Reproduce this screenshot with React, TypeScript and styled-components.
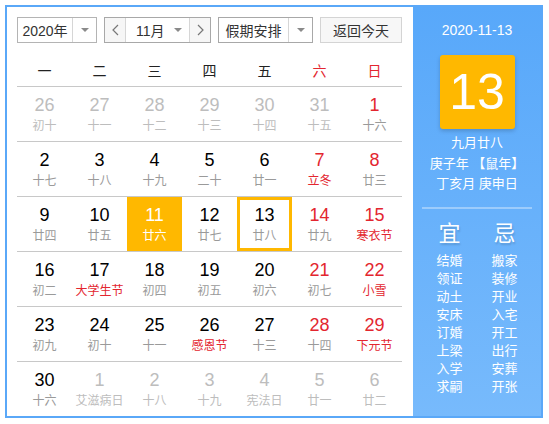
import React from 'react';
import styled, { createGlobalStyle } from 'styled-components';

const GlobalStyle = createGlobalStyle`
  html, body {
    margin: 0;
    padding: 0;
    background: #ffffff;
  }
  body {
    font-family: "Liberation Sans", "Noto Sans CJK SC", sans-serif;
  }
`;

const RED = '#e3262f';
const YELLOW = '#ffb800';

type Day = {
  num: number;
  lunar: string;
  other?: boolean;
  weekend?: boolean;
  festival?: boolean;
};

const weeks: Day[][] = [
  [
    { num: 26, lunar: '初十', other: true },
    { num: 27, lunar: '十一', other: true },
    { num: 28, lunar: '十二', other: true },
    { num: 29, lunar: '十三', other: true },
    { num: 30, lunar: '十四', other: true },
    { num: 31, lunar: '十五', other: true },
    { num: 1, lunar: '十六', weekend: true }
  ],
  [
    { num: 2, lunar: '十七' },
    { num: 3, lunar: '十八' },
    { num: 4, lunar: '十九' },
    { num: 5, lunar: '二十' },
    { num: 6, lunar: '廿一' },
    { num: 7, lunar: '立冬', weekend: true, festival: true },
    { num: 8, lunar: '廿三', weekend: true }
  ],
  [
    { num: 9, lunar: '廿四' },
    { num: 10, lunar: '廿五' },
    { num: 11, lunar: '廿六' },
    { num: 12, lunar: '廿七' },
    { num: 13, lunar: '廿八' },
    { num: 14, lunar: '廿九', weekend: true },
    { num: 15, lunar: '寒衣节', weekend: true, festival: true }
  ],
  [
    { num: 16, lunar: '初二' },
    { num: 17, lunar: '大学生节', festival: true },
    { num: 18, lunar: '初四' },
    { num: 19, lunar: '初五' },
    { num: 20, lunar: '初六' },
    { num: 21, lunar: '初七', weekend: true },
    { num: 22, lunar: '小雪', weekend: true, festival: true }
  ],
  [
    { num: 23, lunar: '初九' },
    { num: 24, lunar: '初十' },
    { num: 25, lunar: '十一' },
    { num: 26, lunar: '感恩节', festival: true },
    { num: 27, lunar: '十三' },
    { num: 28, lunar: '十四', weekend: true },
    { num: 29, lunar: '下元节', weekend: true, festival: true }
  ],
  [
    { num: 30, lunar: '十六' },
    { num: 1, lunar: '艾滋病日', other: true },
    { num: 2, lunar: '十八', other: true },
    { num: 3, lunar: '十九', other: true },
    { num: 4, lunar: '宪法日', other: true },
    { num: 5, lunar: '廿一', other: true },
    { num: 6, lunar: '廿二', other: true }
  ]
];

const weekdays = ['一', '二', '三', '四', '五', '六', '日'];
const goodList = ['结婚', '领证', '动土', '安床', '订婚', '上梁', '入学', '求嗣'];
const badList = ['搬家', '装修', '开业', '入宅', '开工', '出行', '安葬', '开张'];

const Frame = styled.div`
  box-sizing: border-box;
  margin: 5px 0 0 5px;
  width: 538px;
  height: 413px;
  border: 2px solid #5aa8f8;
  display: flex;
  overflow: hidden;
`;

const Main = styled.div`
  width: 406px;
  padding: 10px 0 0 10px;
  box-sizing: border-box;
  display: flex;
  flex-direction: column;
`;

const Toolbar = styled.div`
  display: flex;
  gap: 7px;
  height: 26px;
  width: 385px;
`;

const SelectBox = styled.div<{ $width: number; $label: number; $border?: string }>`
  box-sizing: border-box;
  width: ${(p) => p.$width}px;
  height: 26px;
  border: 1px solid ${(p) => p.$border || '#b4b4b4'};
  display: grid;
  grid-template-columns: ${(p) => p.$label}px 1fr;
  background: #fff;
`;

const SelectLabel = styled.div`
  display: flex;
  align-items: center;
  justify-content: center;
  font-size: 14px;
  color: #333;
  border-right: 1px solid #d6d6d6;
`;

const SelectArrow = styled.div`
  display: flex;
  align-items: center;
  justify-content: center;
  &::after {
    content: '';
    border-left: 4px solid transparent;
    border-right: 4px solid transparent;
    border-top: 4px solid #8a8a8a;
  }
`;

const MonthGroup = styled.div`
  box-sizing: border-box;
  width: 107px;
  height: 26px;
  border: 1px solid #a8a8a8;
  display: grid;
  grid-template-columns: 21px 1fr 21px;
`;

const NavButton = styled.div<{ $side: 'left' | 'right' }>`
  background: #f6f6f6;
  display: flex;
  align-items: center;
  justify-content: center;
  ${(p) => (p.$side === 'left' ? 'border-right' : 'border-left')}: 1px solid #d6d6d6;
`;

const MonthSelect = styled.div`
  display: grid;
  grid-template-columns: 1fr 22px;
  align-items: center;
  font-size: 14px;
  color: #333;
  padding-left: 10px;
`;

const TodayButton = styled.div`
  box-sizing: border-box;
  width: 82px;
  height: 26px;
  border: 1px solid #d4d4d4;
  background: #f7f7f7;
  display: flex;
  align-items: center;
  justify-content: center;
  font-size: 14px;
  color: #333;
`;

const BlueRule = styled.div`
  width: 385px;
  height: 1px;
  margin-top: 10px;
  background: #5aa8f8;
`;

const Grid = styled.div`
  width: 385px;
  display: grid;
  grid-template-columns: repeat(7, 55px);
`;

const HeadCell = styled.div<{ $red?: boolean }>`
  height: 33px;
  border-bottom: 1px solid #c8c8c8;
  display: flex;
  align-items: center;
  justify-content: center;
  font-size: 14px;
  color: ${(p) => (p.$red ? RED : '#222')};
`;

const Row = styled.div<{ $last?: boolean }>`
  grid-column: 1 / -1;
  display: grid;
  grid-template-columns: repeat(7, 55px);
  height: 55px;
  box-sizing: border-box;
  border-bottom: ${(p) => (p.$last ? 'none' : '1px solid #c8c8c8')};
`;

const Cell = styled.div<{ $selected?: boolean; $today?: boolean }>`
  box-sizing: border-box;
  height: 54px;
  display: flex;
  flex-direction: column;
  align-items: center;
  justify-content: center;
  background: ${(p) => (p.$selected ? YELLOW : 'transparent')};
  border: ${(p) => (p.$today ? `3px solid ${YELLOW}` : 'none')};
`;

const DayNum = styled.div<{ $color: string }>`
  font-size: 18px;
  line-height: 22px;
  color: ${(p) => p.$color};
`;

const Lunar = styled.div<{ $color: string }>`
  font-size: 12px;
  line-height: 16px;
  margin-top: 2px;
  color: ${(p) => p.$color};
  white-space: nowrap;
`;

const Side = styled.div`
  flex: 1;
  background: linear-gradient(180deg, #58a8fa 0%, #77bafc 100%);
  display: flex;
  flex-direction: column;
  align-items: center;
  padding-top: 13px;
  color: #fff;
`;

const DateLine = styled.div`
  font-size: 14px;
  line-height: 20px;
`;

const BigDay = styled.div`
  margin-top: 15px;
  width: 75px;
  height: 74px;
  border-radius: 3px;
  background: ${YELLOW};
  box-shadow: 0 2px 4px rgba(0, 0, 0, 0.18);
  display: flex;
  align-items: center;
  justify-content: center;
  font-size: 50px;
  color: #fff;
`;

const LunarInfo = styled.div`
  margin-top: 4px;
  font-size: 13px;
  line-height: 20.5px;
  text-align: center;
  white-space: nowrap;
`;

const Divider = styled.div`
  margin-top: 12px;
  width: 110px;
  height: 2px;
  background: rgba(255, 255, 255, 0.35);
`;

const Almanac = styled.div`
  margin-top: 10px;
  width: 110px;
  display: grid;
  grid-template-columns: 1fr 1fr;
`;

const AlmanacCol = styled.div`
  display: flex;
  flex-direction: column;
  align-items: center;
`;

const AlmanacHead = styled.div`
  font-size: 22px;
  line-height: 30px;
  margin-bottom: 3px;
  text-shadow: 1px 2px 2px rgba(0, 0, 0, 0.15);
`;

const AlmanacItem = styled.div`
  font-size: 13px;
  line-height: 18px;
`;

function Chevron({ dir }: { dir: 'left' | 'right' }) {
  return (
    <svg width="7" height="12" viewBox="0 0 7 12">
      <polyline
        points={dir === 'left' ? '6,1 1,6 6,11' : '1,1 6,6 1,11'}
        fill="none"
        stroke="#777"
        strokeWidth="1.2"
      />
    </svg>
  );
}

function dayColors(d: Day, selected: boolean) {
  if (selected) return { num: '#fff', lunar: '#fff' };
  if (d.other) return { num: '#bdbdbd', lunar: '#bdbdbd' };
  return {
    num: d.weekend ? RED : '#000',
    lunar: d.festival ? RED : '#9a9a9a'
  };
}

export default function App() {
  return (
    <>
      <GlobalStyle />
      <Frame>
        <Main>
          <Toolbar>
            <SelectBox $width={80} $label={55}>
              <SelectLabel>2020年</SelectLabel>
              <SelectArrow />
            </SelectBox>
            <MonthGroup>
              <NavButton $side="left">
                <Chevron dir="left" />
              </NavButton>
              <MonthSelect>
                <span>11月</span>
                <SelectArrow />
              </MonthSelect>
              <NavButton $side="right">
                <Chevron dir="right" />
              </NavButton>
            </MonthGroup>
            <SelectBox $width={95} $label={70} $border="#a8a8a8">
              <SelectLabel>假期安排</SelectLabel>
              <SelectArrow />
            </SelectBox>
            <TodayButton>返回今天</TodayButton>
          </Toolbar>
          <BlueRule />
          <Grid>
            {weekdays.map((w, i) => (
              <HeadCell key={w} $red={i >= 5}>
                {w}
              </HeadCell>
            ))}
            {weeks.map((week, wi) => (
              <Row key={wi} $last={wi === weeks.length - 1}>
                {week.map((d, di) => {
                  const selected = wi === 2 && d.num === 11;
                  const today = wi === 2 && d.num === 13;
                  const c = dayColors(d, selected);
                  return (
                    <Cell key={di} $selected={selected} $today={today}>
                      <DayNum $color={c.num}>{d.num}</DayNum>
                      <Lunar $color={c.lunar}>{d.lunar}</Lunar>
                    </Cell>
                  );
                })}
              </Row>
            ))}
          </Grid>
        </Main>
        <Side>
          <DateLine>2020-11-13</DateLine>
          <BigDay>13</BigDay>
          <LunarInfo>
            九月廿八
            <br />
            庚子年 【鼠年】
            <br />
            丁亥月 庚申日
          </LunarInfo>
          <Divider />
          <Almanac>
            <AlmanacCol>
              <AlmanacHead>宜</AlmanacHead>
              {goodList.map((t) => (
                <AlmanacItem key={t}>{t}</AlmanacItem>
              ))}
            </AlmanacCol>
            <AlmanacCol>
              <AlmanacHead>忌</AlmanacHead>
              {badList.map((t) => (
                <AlmanacItem key={t}>{t}</AlmanacItem>
              ))}
            </AlmanacCol>
          </Almanac>
        </Side>
      </Frame>
    </>
  );
}
